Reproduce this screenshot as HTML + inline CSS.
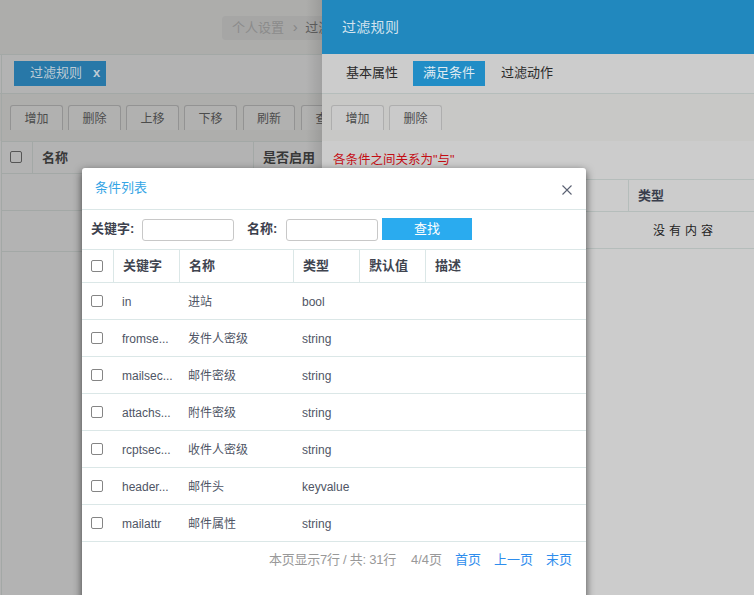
<!DOCTYPE html>
<html lang="zh-CN">
<head>
<meta charset="utf-8">
<title>过滤规则</title>
<style>
*{box-sizing:border-box;margin:0;padding:0}
html,body{width:754px;height:595px;overflow:hidden}
body{position:relative;background:#b3b3b3;font-family:"Liberation Sans","Noto Sans CJK SC",sans-serif;font-size:13px;color:#333}
.abs{position:absolute}
/* left page */
#top{left:0;top:0;width:754px;height:54px;background:#adadab}
#crumb{left:222px;top:16px;width:140px;height:24px;background:#a6a6a5;border-radius:4px;color:#8b8b8b;font-size:13px;line-height:23px;padding-left:10px;white-space:nowrap;overflow:hidden}
#crumb b{font-weight:normal;color:#5e5e5e}
.hl{left:0;width:754px;height:1px;background:#a3a8a6}
#tab{left:14px;top:61px;width:92px;height:25px;background:#2878a8;color:#bdcbd5;font-size:13px;line-height:24px;white-space:nowrap}
#tab span{position:absolute;left:16px;top:0}
#tab i{position:absolute;left:79px;top:0;font-style:normal;font-size:13px;font-weight:bold}
.btn{top:105px;height:25px;width:53px;border:1px solid #939393;border-bottom:none;border-radius:3px 3px 0 0;background:#b1b1b0;color:#4c4c4c;font-size:12px;line-height:26px;text-align:center}
#lth{left:2px;top:141px;width:330px;height:33px;border-top:1px solid #a3a8a6;border-bottom:1px solid #a3a8a6;background:#b3b3b3}
.cb{width:12px;height:12px;border:1px solid #555;border-radius:2px;background:#b3b3b3}
/* right panel */
#rshadow{left:306px;top:0;width:16px;height:595px;background:linear-gradient(to right,rgba(0,0,0,0),rgba(0,0,0,.10))}
#rp{left:322px;top:0;width:432px;height:595px;background:#cccccc}
#rph{left:0;top:0;width:432px;height:54px;background:#2188be;color:#d3e3ee;font-size:14px;line-height:55px;padding-left:20px;letter-spacing:0.3px}
.rtab{top:61px;height:25px;line-height:24px;font-size:13px;color:#2a2a2a;white-space:nowrap}
#rtab2{left:91px;width:72px;background:#218dc6;color:#dfeaf1;text-align:center}
/* dialog */
#dlg{left:82px;top:168px;width:504px;height:440px;background:#fff;border-radius:3px;box-shadow:0 3px 9px rgba(0,0,0,.65)}
#dlg .title{left:13px;top:0;height:41px;line-height:39px;font-size:13px;color:#35a5e5}
.dl{left:0;width:504px;height:1px;background:#dbe7e7}
.vl{width:1px;background:#dbe7e7}
.lbl{font-weight:bold;color:#3c404d;font-size:13px;line-height:20px;white-space:nowrap}
.inp{height:22px;width:92px;border:1px solid #c8c8c8;border-radius:3px;background:#fff}
.th{font-weight:bold;color:#40444f;font-size:13px;line-height:20px;white-space:nowrap}
.td{color:#4f5565;font-size:12px;line-height:22px;white-space:nowrap}
.dcb{left:9px;width:12px;height:12px;border:1px solid #858585;border-radius:2px;background:#fff}
.pg{top:382px;font-size:13px;color:#999;white-space:nowrap;line-height:20px}
a.pg{color:#2e8ded;text-decoration:none}
</style>
</head>
<body>
<div id="top" class="abs"></div>
<div id="crumb" class="abs">个人设置 <span style="margin:0 4px 0 5px;font-size:15px;color:#858585;line-height:20px">›</span> <b>过滤规则</b></div>
<div class="abs" style="left:0;top:94px;width:754px;height:47px;background:#aeaeac"></div>
<div class="abs hl" style="top:54px"></div>
<div class="abs vl" style="left:1px;top:54px;height:541px;background:#a3a8a6"></div>
<div class="abs hl" style="top:93px"></div>
<div id="tab" class="abs"><span>过滤规则</span><i>x</i></div>
<div class="abs btn" style="left:10px">增加</div>
<div class="abs btn" style="left:68px">删除</div>
<div class="abs btn" style="left:126px">上移</div>
<div class="abs btn" style="left:184px">下移</div>
<div class="abs btn" style="left:243px;width:52px">刷新</div>
<div class="abs btn" style="left:301px">查找</div>
<div id="lth" class="abs"></div>
<div class="abs cb" style="left:10px;top:151px"></div>
<div class="abs vl" style="left:32px;top:142px;height:32px;background:#a3a8a6"></div>
<div class="abs th" style="left:42px;top:148px;color:#383838">名称</div>
<div class="abs vl" style="left:253px;top:142px;height:32px;background:#a3a8a6"></div>
<div class="abs th" style="left:263px;top:148px;color:#383838">是否启用</div>
<div class="abs hl" style="top:210px;left:2px"></div>
<div class="abs hl" style="top:251px;left:2px"></div>

<div id="rshadow" class="abs"></div>
<div id="rp" class="abs">
  <div class="abs" style="left:0;top:94px;width:432px;height:47px;background:#c8c8c6"></div>
  <div id="rph" class="abs">过滤规则</div>
  <div class="abs rtab" style="left:24px">基本属性</div>
  <div id="rtab2" class="abs rtab">满足条件</div>
  <div class="abs rtab" style="left:179px">过滤动作</div>
  <div class="abs" style="left:0;top:93px;width:432px;height:1px;background:#b5bdbb"></div>
  <div class="abs btn" style="left:9px;background:#cacaca;border-color:#aeaeae">增加</div>
  <div class="abs btn" style="left:67px;background:#cacaca;border-color:#aeaeae">删除</div>
    <div class="abs" style="left:11px;top:150px;font-size:12.5px;line-height:20px;color:#c40d14;white-space:nowrap">各条件之间关系为"与"</div>
  <div class="abs" style="left:0;top:179px;width:432px;height:1px;background:#b5bdbb"></div>
  <div class="abs" style="left:0;top:211px;width:432px;height:1px;background:#b5bdbb"></div>
  <div class="abs" style="left:0;top:248px;width:432px;height:1px;background:#b5bdbb"></div>
  <div class="abs vl" style="left:306px;top:180px;height:31px;background:#b5bdbb"></div>
  <div class="abs th" style="left:316px;top:186px;color:#3a3e4c">类型</div>
  <div class="abs" style="left:331px;top:221px;font-size:12px;line-height:20px;color:#222;letter-spacing:4px;white-space:nowrap">没有内容</div>
</div>

<div id="dlg" class="abs">
  <div class="abs title">条件列表</div>
  <svg class="abs" style="left:478.5px;top:15.5px" width="12" height="12" viewBox="0 0 12 12"><path d="M1.5 1.5L10.5 10.5M10.5 1.5L1.5 10.5" stroke="#5a6172" stroke-width="1.1" fill="none"/></svg>
  <div class="abs dl" style="top:41px"></div>
  <div class="abs lbl" style="left:9px;top:51px">关键字:</div>
  <div class="abs inp" style="left:60px;top:51px"></div>
  <div class="abs lbl" style="left:165px;top:51px">名称:</div>
  <div class="abs inp" style="left:204px;top:51px"></div>
  <div class="abs" style="left:300px;top:50px;width:90px;height:22px;background:#2aabef;color:#fff;font-size:13px;line-height:22px;text-align:center">查找</div>
  <div class="abs dl" style="top:81px"></div>
  <div class="abs dcb" style="top:92px"></div>
  <div class="abs vl" style="left:31px;top:82px;height:32px"></div>
  <div class="abs th" style="left:41px;top:88px">关键字</div>
  <div class="abs vl" style="left:97px;top:82px;height:32px"></div>
  <div class="abs th" style="left:107px;top:88px">名称</div>
  <div class="abs vl" style="left:211px;top:82px;height:32px"></div>
  <div class="abs th" style="left:221px;top:88px">类型</div>
  <div class="abs vl" style="left:277px;top:82px;height:32px"></div>
  <div class="abs th" style="left:287px;top:88px">默认值</div>
  <div class="abs vl" style="left:343px;top:82px;height:32px"></div>
  <div class="abs th" style="left:353px;top:88px">描述</div>
  <div class="abs dl" style="top:114px"></div>

  <div class="abs dcb" style="top:127px"></div>
  <div class="abs td" style="left:40px;top:123px">in</div>
  <div class="abs td" style="left:106px;top:123px">进站</div>
  <div class="abs td" style="left:220px;top:123px">bool</div>
  <div class="abs dl" style="top:151px"></div>

  <div class="abs dcb" style="top:164px"></div>
  <div class="abs td" style="left:40px;top:160px">fromse...</div>
  <div class="abs td" style="left:106px;top:160px">发件人密级</div>
  <div class="abs td" style="left:220px;top:160px">string</div>
  <div class="abs dl" style="top:188px"></div>

  <div class="abs dcb" style="top:201px"></div>
  <div class="abs td" style="left:40px;top:197px">mailsec...</div>
  <div class="abs td" style="left:106px;top:197px">邮件密级</div>
  <div class="abs td" style="left:220px;top:197px">string</div>
  <div class="abs dl" style="top:225px"></div>

  <div class="abs dcb" style="top:238px"></div>
  <div class="abs td" style="left:40px;top:234px">attachs...</div>
  <div class="abs td" style="left:106px;top:234px">附件密级</div>
  <div class="abs td" style="left:220px;top:234px">string</div>
  <div class="abs dl" style="top:262px"></div>

  <div class="abs dcb" style="top:275px"></div>
  <div class="abs td" style="left:40px;top:271px">rcptsec...</div>
  <div class="abs td" style="left:106px;top:271px">收件人密级</div>
  <div class="abs td" style="left:220px;top:271px">string</div>
  <div class="abs dl" style="top:299px"></div>

  <div class="abs dcb" style="top:312px"></div>
  <div class="abs td" style="left:40px;top:308px">header...</div>
  <div class="abs td" style="left:106px;top:308px">邮件头</div>
  <div class="abs td" style="left:220px;top:308px">keyvalue</div>
  <div class="abs dl" style="top:336px"></div>

  <div class="abs dcb" style="top:349px"></div>
  <div class="abs td" style="left:40px;top:345px">mailattr</div>
  <div class="abs td" style="left:106px;top:345px">邮件属性</div>
  <div class="abs td" style="left:220px;top:345px">string</div>
  <div class="abs dl" style="top:373px"></div>

  <div class="abs pg" style="right:190px;letter-spacing:-0.25px">本页显示7行 / 共: 31行</div>
  <div class="abs pg" style="left:329px">4/4页</div>
  <a class="abs pg" style="left:373px">首页</a>
  <a class="abs pg" style="left:412px">上一页</a>
  <a class="abs pg" style="left:464px">末页</a>
</div>
</body>
</html>
